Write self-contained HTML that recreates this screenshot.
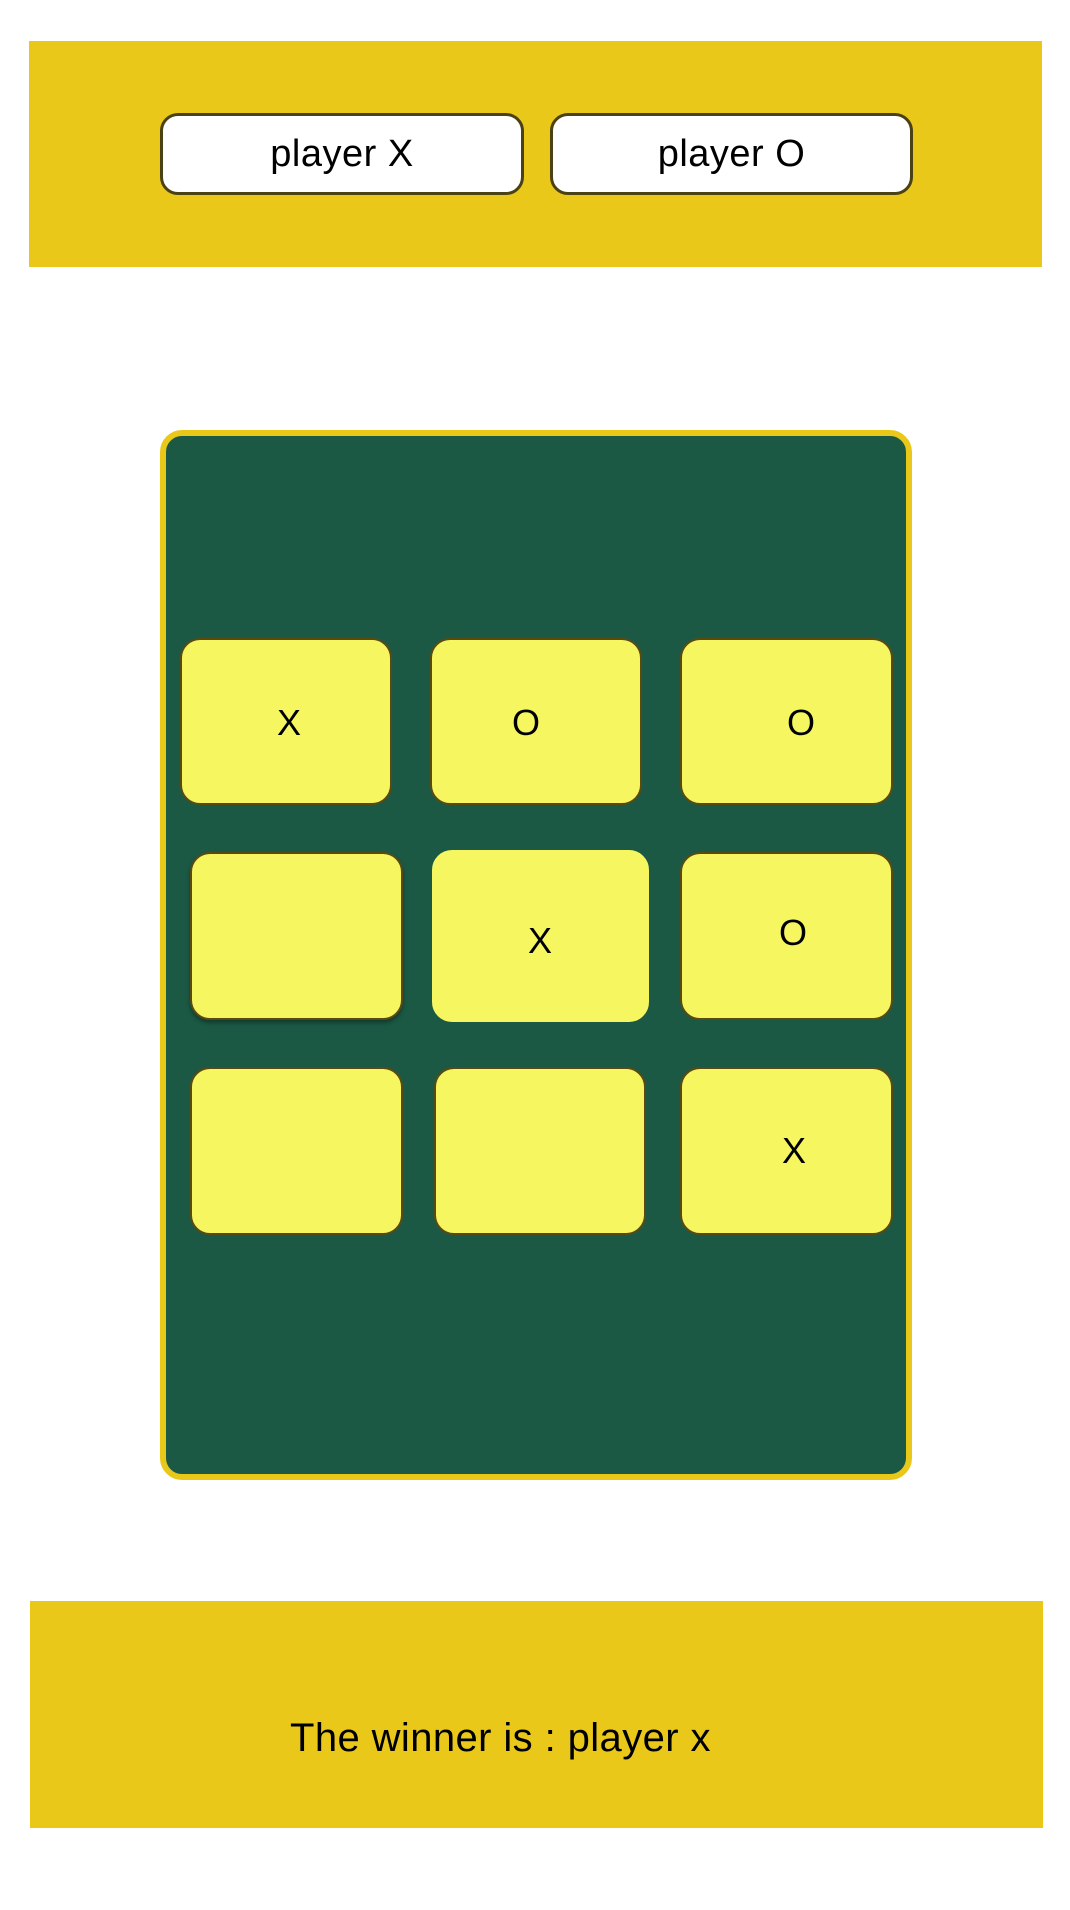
<!DOCTYPE html>
<html><head><meta charset="utf-8"><style>
*{margin:0;padding:0;box-sizing:border-box}
body{width:1070px;height:1910px;background:#fff;position:relative;font-family:"Liberation Sans",sans-serif;color:#000;overflow:hidden}
.ban{position:absolute;background:#E9C81A}
.btn{position:absolute;background:#fff;border:3px solid #4a4215;border-radius:18px;font-size:38px;letter-spacing:0.5px;display:flex;align-items:center;justify-content:center}
.board{position:absolute;left:160px;top:430px;width:752px;height:1050px;background:#1B5945;border:6px solid #E9C81A;border-radius:22px}
.c{position:absolute;background:#F6F660;border:2px solid #5a4a12;border-radius:20px}
.t{position:absolute;font-size:36px;transform:translate(-50%,-50%)}
</style></head><body>
<div class="ban" style="left:29px;top:41px;width:1013px;height:226px"></div>
<div class="btn" style="left:160px;top:113px;width:364px;height:82px">player X</div>
<div class="btn" style="left:550px;top:113px;width:363px;height:82px">player O</div>
<div class="board"></div>
<div class="c" style="left:180px;top:638px;width:212px;height:167px"></div>
<div class="c" style="left:430px;top:638px;width:212px;height:167px"></div>
<div class="c" style="left:680px;top:638px;width:213px;height:167px"></div>
<div class="c" style="left:190px;top:852px;width:213px;height:168px;box-shadow:0 3px 4px rgba(0,0,0,.35)"></div>
<div class="c" style="left:432px;top:850px;width:217px;height:172px;border-color:#F6F660"></div>
<div class="c" style="left:680px;top:852px;width:213px;height:168px"></div>
<div class="c" style="left:190px;top:1067px;width:213px;height:168px"></div>
<div class="c" style="left:434px;top:1067px;width:212px;height:168px"></div>
<div class="c" style="left:680px;top:1067px;width:213px;height:168px"></div>
<div class="t" style="left:289px;top:723px">X</div>
<div class="t" style="left:526px;top:723px">O</div>
<div class="t" style="left:801px;top:723px">O</div>
<div class="t" style="left:540px;top:941px">X</div>
<div class="t" style="left:793px;top:933px">O</div>
<div class="t" style="left:794px;top:1151px">X</div>
<div class="ban" style="left:30px;top:1601px;width:1013px;height:227px"></div>
<div style="position:absolute;left:290px;top:1716px;font-size:40px;letter-spacing:0.4px;white-space:nowrap">The winner is : player x</div>
</body></html>
